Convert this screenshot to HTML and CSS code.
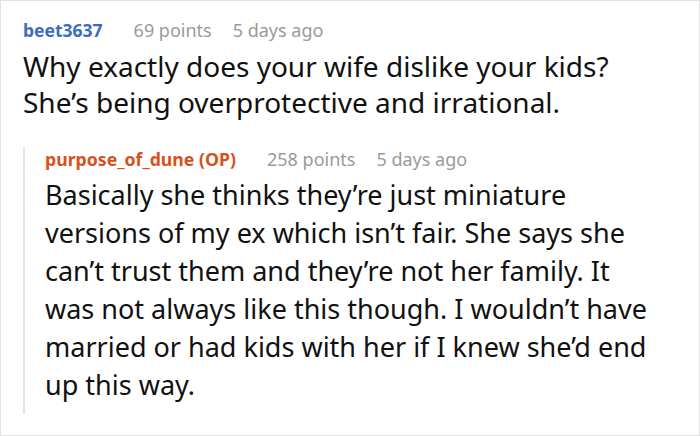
FILE: index.html
```html
<!DOCTYPE html>
<html>
<head>
<meta charset="utf-8">
<link rel="stylesheet" href="styles.css">
</head>
<body>
<div class="frame">
  <div class="comment">
    <div class="meta">
      <span class="user">beet3637</span>
      <span class="points">69 points</span>
      <span class="time">5 days ago</span>
    </div>
    <p class="body">Why exactly does your wife dislike your kids?<br>She’s being overprotective and irrational.</p>
    <div class="reply">
      <div class="meta reply-meta">
        <span class="user op">purpose_of_dune (OP)</span>
        <span class="points">258 points</span>
        <span class="time">5 days ago</span>
      </div>
      <p class="body reply-body">Basically she thinks they’re just miniature<br>versions of my ex which isn’t fair. She says she<br>can’t trust them and they’re not her family. It<br>was not always like this though. I wouldn’t have<br>married or had kids with her if I knew she’d end<br>up this way.</p>
    </div>
  </div>
</div>
</body>
</html>
```
FILE: styles.css
```css
html, body {
  margin: 0;
  padding: 0;
  background: #ffffff;
}
.frame {
  box-sizing: border-box;
  width: 700px;
  height: 436px;
  border: 1px solid #e2e2e2;
  padding: 17px 0 0 22px;
  font-family: "Noto Sans", "Open Sans", sans-serif;
  color: #111;
  overflow: hidden;
}
.meta {
  display: flex;
  align-items: baseline;
  font-size: 18px;
  line-height: 24px;
  color: #9a9a9a;
}
.user {
  font-size: 17.5px;
  font-weight: 700;
  color: #3b6cbf;
  margin-right: 31px;
}
.user.op {
  font-size: 17.7px;
  color: #d6521c;
}
.time {
  margin-left: 21px;
}
.body {
  margin: 6px 0 0;
  font-size: 28px;
  line-height: 36px;
  white-space: nowrap;
}
.reply {
  margin-top: 38px;
  border-left: 2px solid #e4e4e4;
  padding-left: 20px;
  padding-bottom: 10px;
}
.reply-meta {
  margin-top: -11px;
}
.reply-body {
  margin-top: 5px;
  font-size: 27px;
  line-height: 38px;
}
```
